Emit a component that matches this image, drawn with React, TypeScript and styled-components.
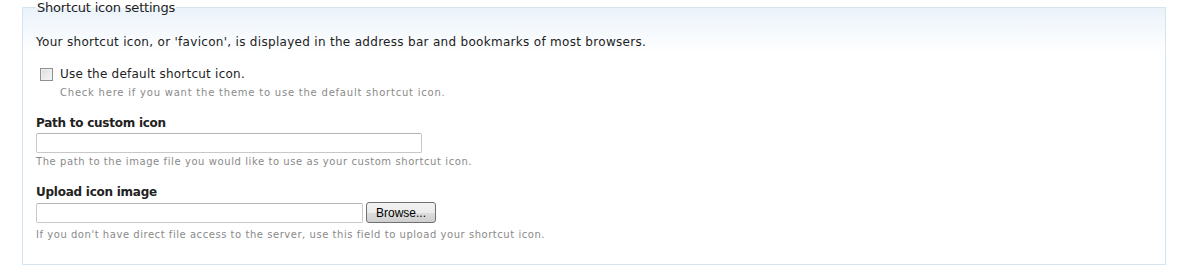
import React from "react";
import styled, { createGlobalStyle } from "styled-components";

const GlobalStyle = createGlobalStyle`
	html, body {
		margin: 0;
		padding: 0;
		background: #fff;
	}
	body {
		font-family: "DejaVu Sans", Verdana, sans-serif;
		color: #222;
	}
`;

const Page = styled.div`
	width: 1184px;
	height: 271px;
	padding: 0 18px 0 22px;
	box-sizing: border-box;
	overflow: hidden;
`;

const Fieldset = styled.fieldset`
	margin: 0;
	width: 1144px;
	height: 265px;
	box-sizing: border-box;
	padding: 0 13px;
	border: 1px solid #d6e4ef;
	background: linear-gradient(#eaf2fa 0px, #ffffff 45px);
	min-width: 0;
`;

const Legend = styled.legend`
	padding: 0 1px;
	font-size: 13px;
	line-height: 15px;
	letter-spacing: -0.2px;
	color: #222;
`;

const Intro = styled.p`
	margin: 20px 0 0;
	font-size: 12px;
	line-height: 15px;
	letter-spacing: 0.3px;
`;

const CheckRow = styled.label`
	display: flex;
	align-items: center;
	gap: 7px;
	margin: 17px 0 0 4px;
	font-size: 12px;
	line-height: 15px;
	letter-spacing: 0.23px;
`;

const Box = styled.span`
	width: 11px;
	height: 11px;
	border: 1px solid #8f8f8f;
	background: linear-gradient(135deg, #dcdcdc, #f6f6f6);
	box-shadow: inset 0 0 0 1px #f0f0f0;
	flex: none;
`;

const Help = styled.div<{ $indent?: boolean; $top?: number; $spacing?: number }>`
	font-size: 10px;
	line-height: 13px;
	letter-spacing: ${(p) => p.$spacing ?? 0.58}px;
	color: #8a8a8a;
	margin: ${(p) => p.$top ?? 3}px 0 0 ${(p) => (p.$indent ? 24 : 0)}px;
`;

const Label = styled.div`
	font-size: 12px;
	font-weight: bold;
	line-height: 15px;
	letter-spacing: -0.25px;
	margin-top: 17px;
`;

const Row = styled.div`
	display: flex;
	align-items: center;
	gap: 3px;
	margin-top: 2px;
`;

const TextBox = styled.div<{ $w: number }>`
	width: ${(p) => p.$w}px;
	height: 20px;
	box-sizing: border-box;
	border: 1px solid #c8c8c8;
	border-top-color: #b5b5b5;
	border-radius: 2px;
	background: #fff;
`;

const Browse = styled.button`
	height: 21px;
	width: 70px;
	padding: 0;
	box-sizing: border-box;
	border: 1px solid #707070;
	border-radius: 3px;
	background: linear-gradient(#f2f2f2 0%, #ebebeb 50%, #dddddd 51%, #cfcfcf 100%);
	font-family: "Liberation Sans", Arial, sans-serif;
	font-size: 12px;
	color: #000;
`;

export default function App() {
	return (
		<Page>
			<GlobalStyle />
			<Fieldset>
				<Legend>Shortcut icon settings</Legend>
				<Intro>
					Your shortcut icon, or 'favicon', is displayed in the address bar and
					bookmarks of most browsers.
				</Intro>
				<CheckRow>
					<Box />
					Use the default shortcut icon.
				</CheckRow>
				<Help $indent $top={4} $spacing={0.78}>
					Check here if you want the theme to use the default shortcut icon.
				</Help>
				<Label>Path to custom icon</Label>
				<Row>
					<TextBox $w={386} />
				</Row>
				<Help $top={2}>
					The path to the image file you would like to use as your custom
					shortcut icon.
				</Help>
				<Label>Upload icon image</Label>
				<Row>
					<TextBox $w={327} />
					<Browse>Browse...</Browse>
				</Row>
				<Help $top={5} $spacing={0.54}>
					If you don't have direct file access to the server, use this field to
					upload your shortcut icon.
				</Help>
			</Fieldset>
		</Page>
	);
}
